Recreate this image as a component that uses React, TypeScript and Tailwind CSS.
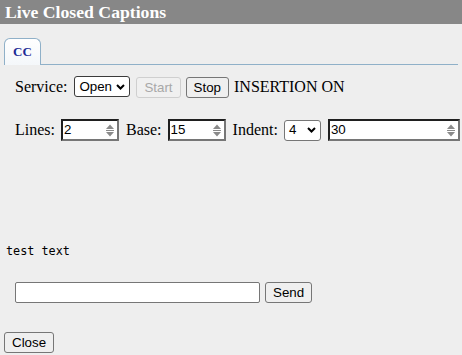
import React from "react";

function Spinner() {
    return (
        <svg width="8" height="13" viewBox="0 0 8 13" className="shrink-0">
            <path d="M0 5 L4 0.5 L8 5 Z" fill="#8a8a8a" />
            <path d="M0 6.5 H8" stroke="#8a8a8a" strokeWidth="1" />
            <path d="M0 8 L8 8 L4 12.5 Z" fill="#8a8a8a" />
        </svg>
    );
}

function NumberBox({ value, width }: { value: string; width: string }) {
    return (
        <div
            className={`${width} h-[22px] flex items-center bg-white border-2 border-t-[#1f1f1f] border-l-[#1f1f1f] border-b-[#767676] border-r-[#767676] pl-[1px] pr-[3px]`}
        >
            <input
                type="text"
                defaultValue={value}
                className="flex-1 min-w-0 bg-transparent outline-none text-[13.33px] text-black"
                style={{ fontFamily: '"Liberation Sans", Arial, sans-serif' }}
            />
            <Spinner />
        </div>
    );
}

function Chevron() {
    return (
        <svg width="9" height="6" viewBox="0 0 9 6" className="pointer-events-none">
            <path d="M1 1 L4.5 4.5 L8 1" stroke="#000" strokeWidth="2" fill="none" />
        </svg>
    );
}

function Select({ value, width, dark }: { value: string; width: string; dark?: boolean }) {
    return (
        <div
            className={`${width} h-[21px] flex items-center justify-between bg-white border rounded-[3px] pl-[4px] pr-[4px] ${dark ? "border-[#3b3b3b]" : "border-[#767676]"}`}
        >
            <span className="text-[13.33px] text-black leading-none">{value}</span>
            <Chevron />
        </div>
    );
}

function Btn({ label, disabled }: { label: string; disabled?: boolean }) {
    return (
        <button
            disabled={disabled}
            className={`h-[21px] px-[7px] rounded-[3px] border text-[13.33px] leading-none ${
                disabled
                    ? "bg-[#f0f0f0] border-[#cfcfcf] text-[#a8a8a8]"
                    : "bg-[#efefef] border-[#767676] text-black"
            }`}
        >
            {label}
        </button>
    );
}

export default function App() {
    const serif = { fontFamily: '"Liberation Serif", "Times New Roman", serif' };
    const sans = { fontFamily: '"Liberation Sans", Arial, sans-serif' };

    return (
        <div className="w-[462px] h-[355px] bg-[#eeeeee] flex flex-col overflow-hidden" style={sans}>
            {/* Title */}
            <div className="h-[24px] shrink-0 bg-[#878787] flex items-center pl-[5px]">
                <span className="text-white font-bold text-[17.7px]" style={serif}>
                    Live Closed Captions
                </span>
            </div>

            {/* Tabs */}
            <div className="mt-[14px] mx-[4px] border-b border-[#8fb0c8] flex">
                <div className="w-[37px] h-[27px] -mb-px border border-b-0 border-[#8fb0c8] rounded-t-[6px] bg-gradient-to-b from-white to-[#f4f7fa] flex items-center justify-center">
                    <span className="font-bold text-[13px] text-[#1c2a96]" style={serif}>
                        CC
                    </span>
                </div>
            </div>

            {/* Service row */}
            <div className="mt-[11px] pl-[15px] flex items-center h-[21px]">
                <span className="text-[16px] text-black mr-[7px]" style={serif}>
                    Service:
                </span>
                <Select value="Open" width="w-[56px]" dark />
                <div className="ml-[6px]">
                    <Btn label="Start" disabled />
                </div>
                <div className="ml-[5px]">
                    <Btn label="Stop" />
                </div>
                <span className="ml-[5px] text-[16px] text-black" style={serif}>
                    INSERTION ON
                </span>
            </div>

            {/* Lines row */}
            <div className="mt-[22px] pl-[15px] flex items-center h-[22px]">
                <span className="text-[16px] text-black mr-[6px]" style={serif}>
                    Lines:
                </span>
                <NumberBox value="2" width="w-[58px]" />
                <span className="ml-[7px] mr-[6px] text-[16px] text-black" style={serif}>
                    Base:
                </span>
                <NumberBox value="15" width="w-[58px]" />
                <span className="ml-[7px] mr-[6px] text-[16px] text-black" style={serif}>
                    Indent:
                </span>
                <Select value="4" width="w-[37px]" />
                <div className="ml-[7px]">
                    <NumberBox value="30" width="w-[132px]" />
                </div>
            </div>

            {/* Caption output */}
            <div
                className="mt-[103px] pl-[6px] text-[11.8px] leading-[15px] text-black"
                style={{ fontFamily: '"DejaVu Sans Mono", monospace' }}
            >
                test text
            </div>

            {/* Send row */}
            <div className="mt-[21px] pl-[15px] flex items-center">
                <input
                    type="text"
                    className="w-[245px] h-[21px] bg-white border border-[#767676] rounded-[2px] outline-none px-[2px] text-[13.33px]"
                />
                <div className="ml-[5px]">
                    <Btn label="Send" />
                </div>
            </div>

            {/* Footer */}
            <div className="mt-[26px] pl-[4px]">
                <Btn label="Close" />
            </div>
        </div>
    );
}
